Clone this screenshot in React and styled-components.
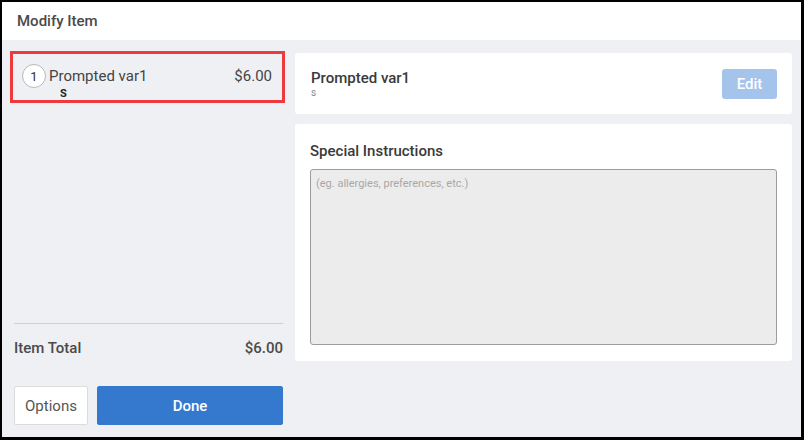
import React from "react";
import styled, { createGlobalStyle } from "styled-components";

const Global = createGlobalStyle`
  html, body { margin: 0; padding: 0; background: #fff; }
  * { box-sizing: border-box; }
  body { font-family: Roboto, "Liberation Sans", Arial, sans-serif; }
`;

const Frame = styled.div`
  width: 804px;
  height: 440px;
  border: 2px solid #000;
  border-right-width: 3px;
  border-bottom-width: 3px;
  display: flex;
  flex-direction: column;
  background: #eff0f4;
`;

const Header = styled.div`
  height: 38px;
  background: #fff;
  display: flex;
  align-items: center;
  padding-left: 15px;
  font-size: 15px;
  font-weight: 500;
  color: #4a4a4a;
  flex-shrink: 0;
`;

const Body = styled.div`
  flex: 1;
  display: flex;
  min-height: 0;
`;

const LeftCol = styled.div`
  width: 288px;
  display: flex;
  flex-direction: column;
  padding: 11px 5px 12px 8px;
`;

const ItemBox = styled.div`
  border: 3px solid #ec3a3f;
  height: 52px;
  display: flex;
  align-items: flex-start;
  padding: 10px 10px 0 9px;
  color: #444;
`;

const Circle = styled.div`
  width: 24px;
  height: 24px;
  border-radius: 50%;
  border: 1px solid #b8b8b8;
  background: #fff;
  display: flex;
  align-items: center;
  justify-content: center;
  font-size: 13px;
  color: #333;
  flex-shrink: 0;
  margin-right: 3px;
`;

const ItemInfo = styled.div`
  flex: 1;
  display: flex;
  flex-direction: column;
`;

const ItemName = styled.div`
  font-size: 15px;
  line-height: 24px;
  color: #444;
`;

const ItemMod = styled.div`
  font-size: 11px;
  font-weight: 700;
  color: #222;
  line-height: 11px;
  padding-left: 11px;
`;

const Price = styled.div`
  font-size: 15px;
  line-height: 24px;
  color: #444;
`;

const Spacer = styled.div`
  flex: 1;
`;

const Bottom = styled.div`
  margin: 0 2px 0 4px;
  display: flex;
  flex-direction: column;
`;

const Separator = styled.div`
  height: 1px;
  background: #cfd0d4;
`;

const TotalRow = styled.div`
  height: 48px;
  display: flex;
  align-items: center;
  justify-content: space-between;
  font-size: 15px;
  font-weight: 500;
  color: #4a4a4a;
`;

const Buttons = styled.div`
  display: flex;
  gap: 9px;
  margin-top: 14px;
`;

const Button = styled.button`
  height: 39px;
  border-radius: 2px;
  font-family: inherit;
  font-size: 15px;
  cursor: pointer;
  padding: 0;
  width: ${(p) => (p.$primary ? "auto" : "74px")};
  flex: ${(p) => (p.$primary ? 1 : "none")};
  background: ${(p) => (p.$primary ? "#3579cf" : "#fff")};
  color: ${(p) => (p.$primary ? "#fff" : "#555")};
  font-weight: ${(p) => (p.$primary ? 500 : 400)};
  border: 1px solid ${(p) => (p.$primary ? "#3579cf" : "#dcdcdc")};
`;

const RightCol = styled.div`
  flex: 1;
  display: flex;
  flex-direction: column;
  gap: 10px;
  padding: 13px 9px 0 5px;
`;

const Card = styled.div`
  background: #fff;
  border-radius: 3px;
  padding: ${(p) => p.$pad};
  display: flex;
  flex-direction: ${(p) => p.$dir || "row"};
  align-items: ${(p) => p.$align || "stretch"};
  height: ${(p) => p.$h};
`;

const CardTitleBox = styled.div`
  flex: 1;
  display: flex;
  flex-direction: column;
`;

const CardTitle = styled.div`
  font-size: 15px;
  font-weight: 500;
  color: #3a3a3a;
  line-height: 18px;
`;

const CardSub = styled.div`
  font-size: 10px;
  color: #888;
  line-height: 12px;
`;

const EditButton = styled.button`
  width: 55px;
  height: 30px;
  border: none;
  border-radius: 3px;
  background: #a4c4ec;
  color: #fff;
  font-family: inherit;
  font-size: 15px;
  font-weight: 500;
  padding: 0;
`;

const TextArea = styled.textarea`
  margin-top: 9px;
  height: 176px;
  width: 100%;
  resize: none;
  background: #ececec;
  border: 1px solid #9c9c9c;
  border-radius: 3px;
  font-family: inherit;
  font-size: 11px;
  padding: 7px 5px;
  color: #444;
  outline: none;
  &::placeholder { color: #a8a8a8; }
`;

export default function App() {
  return (
    <>
      <Global />
      <Frame>
        <Header>Modify Item</Header>
        <Body>
          <LeftCol>
            <ItemBox>
              <Circle>1</Circle>
              <ItemInfo>
                <ItemName>Prompted var1</ItemName>
                <ItemMod>S</ItemMod>
              </ItemInfo>
              <Price>$6.00</Price>
            </ItemBox>
            <Spacer />
            <Bottom>
              <Separator />
              <TotalRow>
                <span>Item Total</span>
                <span>$6.00</span>
              </TotalRow>
              <Buttons>
                <Button>Options</Button>
                <Button $primary>Done</Button>
              </Buttons>
            </Bottom>
          </LeftCol>
          <RightCol>
            <Card $pad="0 15px 0 16px" $align="center" $h="61px">
              <CardTitleBox>
                <CardTitle>Prompted var1</CardTitle>
                <CardSub>s</CardSub>
              </CardTitleBox>
              <EditButton>Edit</EditButton>
            </Card>
            <Card $pad="18px 15px 16px 15px" $dir="column" $h="237px">
              <CardTitle>Special Instructions</CardTitle>
              <TextArea placeholder="(eg. allergies, preferences, etc.)" />
            </Card>
          </RightCol>
        </Body>
      </Frame>
    </>
  );
}
